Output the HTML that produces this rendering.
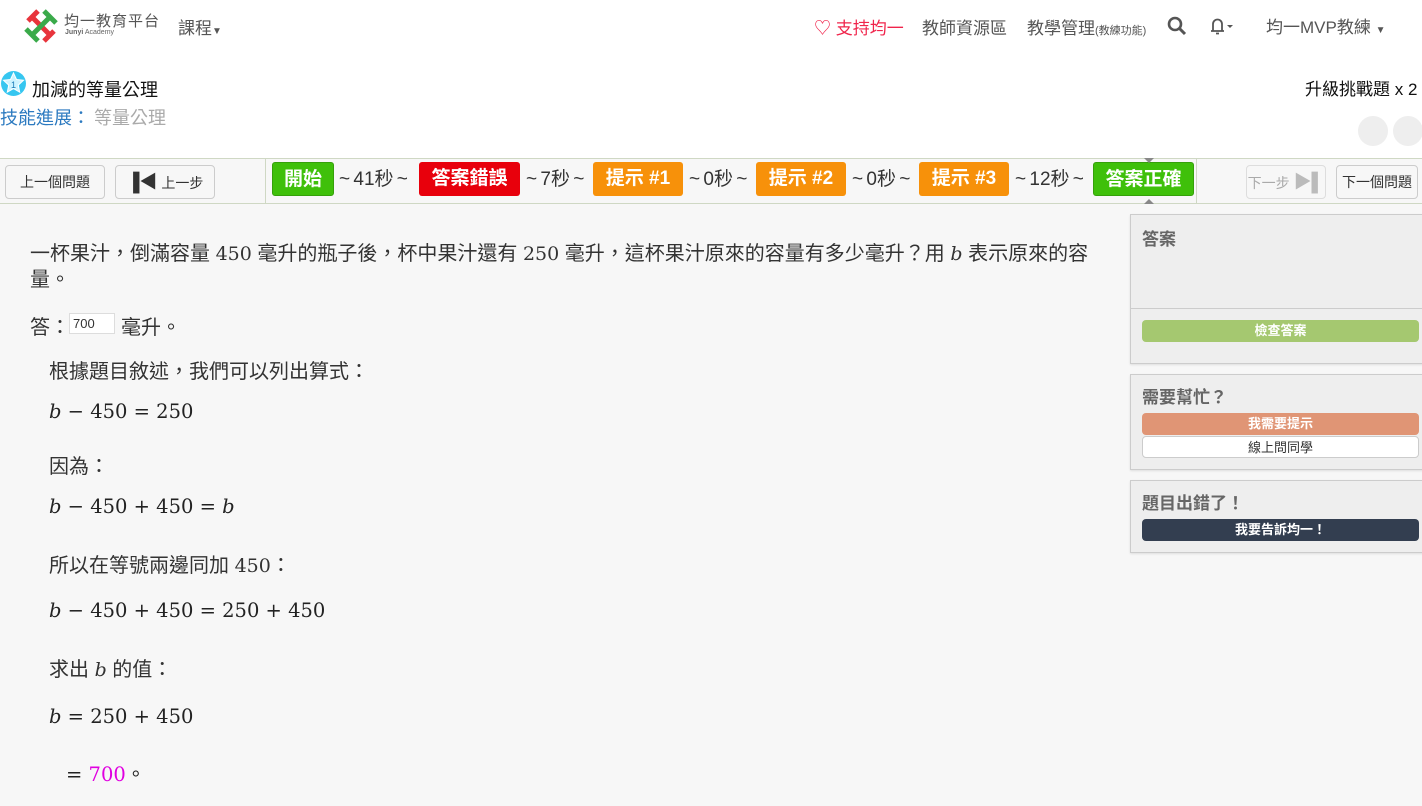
<!DOCTYPE html>
<html><head><meta charset="utf-8"><style>
*{margin:0;padding:0;box-sizing:border-box}
body{width:1422px;height:806px;overflow:hidden;background:#f7f7f7;font-family:"Liberation Sans","Noto Sans CJK TC",sans-serif;color:#333;position:relative}
.a{position:absolute;white-space:nowrap}
#hdr{position:absolute;left:0;top:0;width:1422px;height:56px;background:#fff;box-shadow:0 2px 5px rgba(0,0,0,.1)}
#top{position:absolute;left:0;top:56px;width:1422px;height:102px;background:#fff}
#bar{position:absolute;left:0;top:158px;width:1422px;height:46px;background:#f7f7f7;border-top:1px solid #cfd8c4;border-bottom:1px solid #cfd8c4}
.btn{position:absolute;top:6px;height:34px;border:1px solid #ccc;border-radius:4px;background:#f7f7f7;font-size:14px;line-height:32px;text-align:center;color:#333}
.tag{position:absolute;top:3px;height:34px;border-radius:3px;color:#fff;font-size:19px;font-weight:bold;line-height:34px;text-align:center}
.tt{position:absolute;top:4px;line-height:34px;font-size:19px;color:#333;word-spacing:-2px}
.g{background:#3fc00a;border:1px solid #35a00a}.r{background:#e8000c}.o{background:#f7910a}
.pn{position:absolute;left:1130px;width:300px;background:#eee;border:1px solid #ccc;box-shadow:0 1px 2px rgba(0,0,0,.1)}
.pt{position:absolute;left:11px;font-size:17px;font-weight:bold;color:#666}
.pb{position:absolute;left:11px;width:277px;height:22px;border-radius:4px;font-size:13px;font-weight:bold;line-height:22px;text-align:center;color:#fff}
.m{font-family:"DejaVu Serif","Liberation Serif",serif;font-size:19.5px;color:#222}
.i{font-style:italic}
.tx{font-size:20px}
.n{font-family:"DejaVu Serif",serif;font-size:19px}
</style></head><body>
<div id="hdr">
<svg class="a" style="left:24px;top:9px" width="34" height="34" viewBox="0 0 34 34">
<g stroke-width="5" stroke-linecap="butt">
<line x1="4" y1="12" x2="14" y2="2" stroke="#e8343c"/><line x1="20" y1="32" x2="30" y2="22" stroke="#e8343c"/>
<line x1="2" y1="20" x2="14" y2="32" stroke="#3aaa4a"/><line x1="20" y1="2" x2="32" y2="14" stroke="#3aaa4a"/>
<line x1="9" y1="9" x2="25" y2="25" stroke="#e8343c"/><line x1="9" y1="25" x2="25" y2="9" stroke="#3aaa4a"/>
</g></svg>
<div class="a" style="left:64px;top:10px;font-size:15px;color:#555;letter-spacing:1px">均一教育平台</div>
<div class="a" style="left:65px;top:29px;font-size:7px;color:#666"><b>Junyi</b> Academy</div>
<div class="a" style="left:178px;top:14px;font-size:17px;color:#555">課程<span style="font-size:10px">▼</span></div>
<div class="a" style="left:814px;top:14px;font-size:17px;color:#f0244b">♡ 支持均一</div>
<div class="a" style="left:922px;top:14px;font-size:17px;color:#555">教師資源區</div>
<div class="a" style="left:1027px;top:14px;font-size:17px;color:#555">教學管理<span style="font-size:11px">(教練功能)</span></div>
<svg class="a" style="left:1167px;top:16px" width="20" height="20" viewBox="0 0 20 20"><circle cx="8" cy="8" r="6" stroke="#555" stroke-width="2.6" fill="none"/><line x1="12.5" y1="12.5" x2="18" y2="18" stroke="#555" stroke-width="3"/></svg>
<svg class="a" style="left:1208px;top:16px" width="28" height="20" viewBox="0 0 28 20"><path d="M3 15h13M5 15V8a4.5 4.5 0 0 1 9 0v7M8 17.5h3" stroke="#555" stroke-width="1.8" fill="none"/><path d="M19 9h6l-3 3z" fill="#555"/></svg>
<div class="a" style="left:1266px;top:13px;font-size:17px;color:#555">均一MVP教練 <span style="font-size:10px">▼</span></div>
</div>
<div id="top">
<svg class="a" style="left:0;top:14px" width="27" height="27" viewBox="0 0 27 27"><circle cx="13.5" cy="13.5" r="12.5" fill="#36c6f0"/><path d="M13.5 3l3 6.5 7 .8-5.2 4.8 1.4 7-6.2-3.5-6.2 3.5 1.4-7L3.5 10.3l7-.8z" fill="#cdf3ff" stroke="#fff" stroke-width="1"/><text x="13.5" y="18" font-size="9" text-anchor="middle" fill="#1a7ab8" font-family="Liberation Sans">1</text></svg>
<div class="a" style="left:32px;top:20px;font-size:18px;color:#111">加減的等量公理</div>
<div class="a" style="left:0;top:48px;font-size:18px;color:#2c7ac0">技能進展：<span style="color:#aaa;margin-left:4px">等量公理</span></div>
<div class="a" style="left:1305px;top:19px;font-size:17px;color:#111">升級挑戰題 x 2</div>
<div class="a" style="left:1358px;top:60px;width:30px;height:30px;border-radius:50%;background:#eee"></div>
<div class="a" style="left:1393px;top:60px;width:30px;height:30px;border-radius:50%;background:#eee"></div>
</div>
<div id="bar">
<div class="btn" style="left:5px;width:100px">上一個問題</div>
<div class="btn" style="left:115px;width:100px"><span style="font-weight:bold;font-size:18px;color:#333">▐◀</span> 上一步</div>
<div class="a" style="left:265px;top:0;width:1px;height:44px;background:#cfd8c4"></div>
<div class="tag g" style="left:272px;width:62px">開始</div>
<div class="tt" style="left:339px">~ 41秒 ~</div>
<div class="tag r" style="left:419px;width:101px">答案錯誤</div>
<div class="tt" style="left:526px">~ 7秒 ~</div>
<div class="tag o" style="left:593px;width:90px">提示 #1</div>
<div class="tt" style="left:689px">~ 0秒 ~</div>
<div class="tag o" style="left:756px;width:90px">提示 #2</div>
<div class="tt" style="left:852px">~ 0秒 ~</div>
<div class="tag o" style="left:919px;width:90px">提示 #3</div>
<div class="tt" style="left:1015px">~ 12秒 ~</div>
<div class="tag g" style="left:1093px;width:101px">答案正確</div>
<div class="a" style="left:1144px;top:-1px;border:5px solid transparent;border-top-color:#888"></div>
<div class="a" style="left:1144px;top:35px;border:5px solid transparent;border-bottom-color:#888"></div>
<div class="a" style="left:1196px;top:0;width:1px;height:44px;background:#cfd8c4"></div>
<div class="btn" style="left:1246px;width:80px;color:#aaa;border-color:#ddd">下一步 <span style="color:#bbb;font-size:18px;font-weight:bold">▶▌</span></div>
<div class="btn" style="left:1336px;width:82px">下一個問題</div>
</div>
<div class="a tx" style="left:30px;top:241px;line-height:26px">一杯果汁，倒滿容量 <span class="n">450</span> 毫升的瓶子後，杯中果汁還有 <span class="n">250</span> 毫升，這杯果汁原來的容量有多少毫升？用 <span class="n i">b</span> 表示原來的容<br>量。</div>
<div class="a tx" style="left:30px;top:311px">答：</div>
<div class="a" style="left:69px;top:313px;width:46px;height:21px;background:#fff;border:1px solid #ddd;font-size:13px;line-height:20px;padding-left:3px">700</div>
<div class="a tx" style="left:121px;top:311px">毫升。</div>
<div class="a tx" style="left:49px;top:355px">根據題目敘述，我們可以列出算式：</div>
<div class="a m" style="left:49px;top:400px"><span class="i">b</span> − 450 = 250</div>
<div class="a tx" style="left:49px;top:450px">因為：</div>
<div class="a m" style="left:49px;top:495px"><span class="i">b</span> − 450 + 450 = <span class="i">b</span></div>
<div class="a tx" style="left:49px;top:549px">所以在等號兩邊同加 <span class="n">450</span>：</div>
<div class="a m" style="left:49px;top:599px"><span class="i">b</span> − 450 + 450 = 250 + 450</div>
<div class="a tx" style="left:49px;top:653px">求出 <span class="n i">b</span> 的值：</div>
<div class="a m" style="left:49px;top:705px"><span class="i">b</span> = 250 + 450</div>
<div class="a m" style="left:66px;top:758px">= <span style="color:#e000e0">700</span><span class="tx" style="font-family:'Liberation Sans','Noto Sans CJK TC',sans-serif">。</span></div>
<div class="pn" style="top:214px;height:150px">
<div class="pt" style="top:10px">答案</div>
<div class="a" style="left:0;top:93px;width:300px;height:1px;background:#ccc"></div>
<div class="pb" style="top:105px;background:#a5c870">檢查答案</div>
</div>
<div class="pn" style="top:374px;height:96px">
<div class="pt" style="top:8px">需要幫忙？</div>
<div class="pb" style="top:38px;background:#e09575">我需要提示</div>
<div class="pb" style="top:61px;background:#fff;color:#333;border:1px solid #ccc;font-weight:normal">線上問同學</div>
</div>
<div class="pn" style="top:480px;height:73px">
<div class="pt" style="top:8px">題目出錯了！</div>
<div class="pb" style="top:38px;background:#333e50">我要告訴均一！</div>
</div>
</body></html>
